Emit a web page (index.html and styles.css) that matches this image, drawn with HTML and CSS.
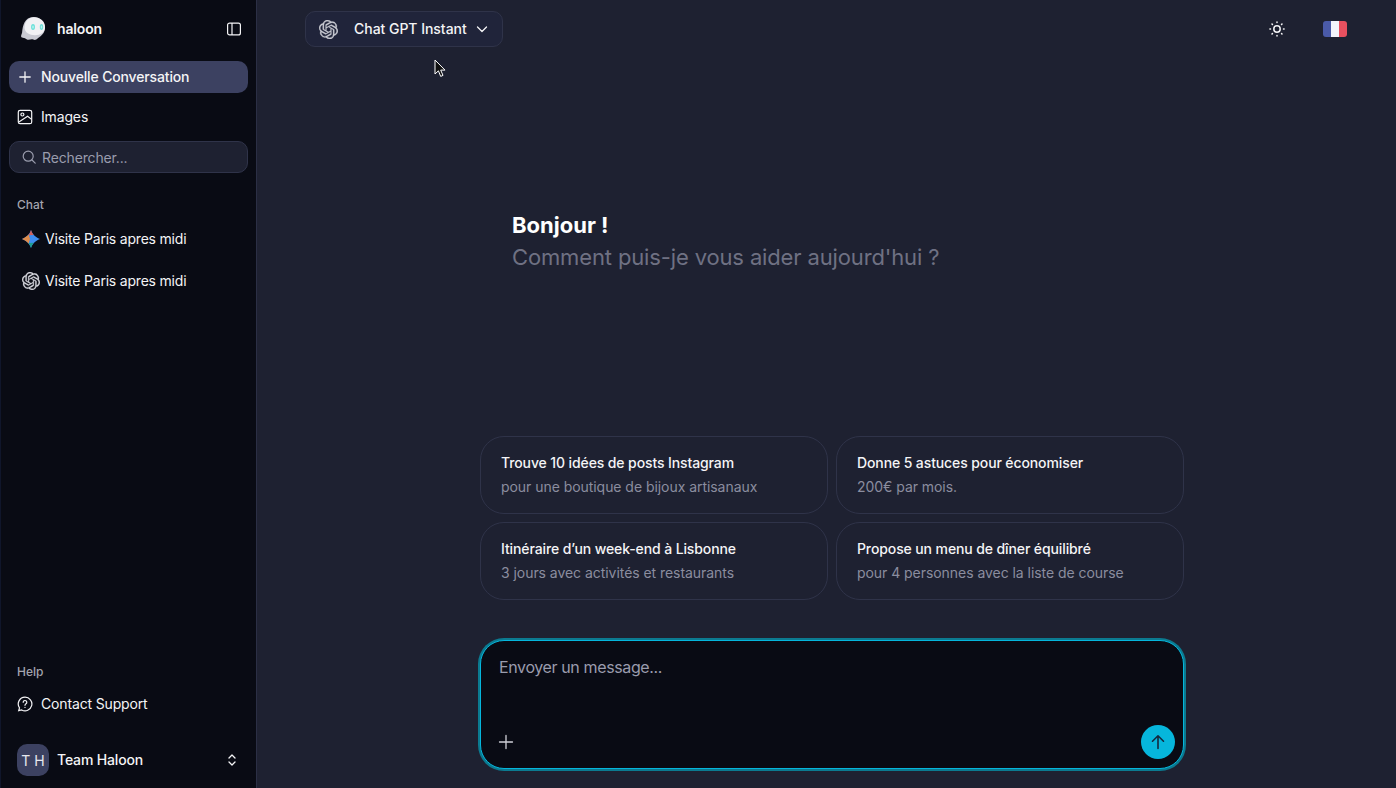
FILE: index.html
```html
<!DOCTYPE html>
<html lang="fr">
<head>
  <meta charset="UTF-8">
  <title>Haloon</title>
  <link rel="stylesheet" href="styles.css">
</head>
<body>
  <svg class="svg-defs" width="0" height="0">
    <defs>
      <symbol id="gpt" viewBox="0 0 24 24">
        <path fill="currentColor" stroke="currentColor" stroke-width="0.35" d="M22.28 9.82a5.98 5.98 0 0 0-.52-4.91 6.05 6.05 0 0 0-6.51-2.9A6.07 6.07 0 0 0 4.98 4.18a5.98 5.98 0 0 0-4 2.9 6.05 6.05 0 0 0 .74 7.1 5.98 5.98 0 0 0 .51 4.91 6.05 6.05 0 0 0 6.52 2.9A5.98 5.98 0 0 0 13.26 24a6.06 6.06 0 0 0 5.77-4.21 5.99 5.99 0 0 0 4-2.9 6.06 6.06 0 0 0-.75-7.07zM13.26 22.43a4.48 4.48 0 0 1-2.88-1.04l.14-.08 4.78-2.76a.79.79 0 0 0 .39-.68v-6.74l2.02 1.17a.07.07 0 0 1 .04.05v5.58a4.5 4.5 0 0 1-4.49 4.5zM3.6 18.3a4.47 4.47 0 0 1-.53-3.01l.14.08 4.78 2.76a.77.77 0 0 0 .78 0l5.84-3.37v2.33a.08.08 0 0 1-.03.06l-4.83 2.79a4.5 4.5 0 0 1-6.14-1.65zM2.34 7.9a4.49 4.49 0 0 1 2.37-1.97v5.68a.77.77 0 0 0 .39.68l5.81 3.35-2.02 1.17a.08.08 0 0 1-.07 0L3.99 14a4.5 4.5 0 0 1-1.65-6.1zm16.6 3.86-5.84-3.39 2.02-1.16a.08.08 0 0 1 .07 0l4.83 2.79a4.49 4.49 0 0 1-.68 8.1v-5.68a.79.79 0 0 0-.4-.66zm2.01-3.02-.14-.09-4.77-2.78a.78.78 0 0 0-.79 0L9.41 9.23V6.9a.07.07 0 0 1 .03-.06l4.83-2.79a4.5 4.5 0 0 1 6.68 4.66zM8.31 12.86l-2.02-1.16a.08.08 0 0 1-.04-.06V6.08a4.5 4.5 0 0 1 7.37-3.45l-.14.08-4.78 2.76a.79.79 0 0 0-.39.68zm1.1-2.37 2.6-1.5 2.6 1.5v3l-2.6 1.5-2.6-1.5z"/>
      </symbol>
    </defs>
  </svg>

  <div class="app">
    <aside class="sidebar">
      <div class="brand">
        <div class="brand-left">
          <svg class="logo" viewBox="0 0 26 26">
            <path fill="#c9cad3" d="M13.500 1C20 1 25 5.500 25 11.500c0 4.500-2.600 7.500-5.500 9.500-1.500 1.100-2.300 2.300-3.800 2.800-1.600.5-2.500-.5-3.900-.5-1.500 0-2.700.9-4.300.4-1.500-.5-2-1.700-3.500-1.800-1.500-.1-2.700-.5-2.900-1.500-.2-1.100.6-2.400 1-4C2.700 10 4.500 1 13.500 1z"/>
            <path fill="#f1f1f4" d="M14 1.200c6 0 11 4.300 11 10 0 5.300-4.500 8-10 8S4.500 16.500 4.500 11.500C4.500 5.500 8.500 1.200 14 1.200z"/>
            <ellipse cx="13" cy="11" rx="2" ry="3" fill="#6fe0da"/>
            <ellipse cx="21.500" cy="11" rx="1.700" ry="3" fill="#6fe0da"/>
            <ellipse cx="13" cy="11" rx="0.800" ry="1.500" fill="#b9f3ee"/>
            <ellipse cx="21.500" cy="11" rx="0.700" ry="1.500" fill="#b9f3ee"/>
          </svg>
          <span class="brand-name label">haloon</span>
        </div>
        <svg class="icon-16" viewBox="0 0 16 16" fill="none" stroke="currentColor" stroke-width="1.200">
          <rect x="1.600" y="2.100" width="12.800" height="11.800" rx="2"/>
          <path d="M6 2.100v11.800"/>
        </svg>
      </div>

      <a class="new-chat">
        <svg class="icon-16" viewBox="0 0 16 16" fill="none" stroke="currentColor" stroke-width="1.300" stroke-linecap="round">
          <path d="M8 2.800v10.400M2.800 8h10.400"/>
        </svg>
        <span class="label">Nouvelle Conversation</span>
      </a>

      <a class="nav-item">
        <svg class="icon-16" viewBox="0 0 16 16" fill="none" stroke="currentColor" stroke-width="1.200">
          <rect x="1.300" y="1.300" width="13.400" height="13.400" rx="1.800"/>
          <circle cx="5.400" cy="5.500" r="1.500"/>
          <path d="M1.500 13.200 10.600 7.200l4 3.200"/>
        </svg>
        <span class="label">Images</span>
      </a>

      <div class="search">
        <svg class="search-icon" viewBox="0 0 14 14" fill="none" stroke="currentColor" stroke-width="1.200" stroke-linecap="round">
          <circle cx="6.200" cy="6.200" r="5"/>
          <path d="m10 10 3.200 3.200"/>
        </svg>
        <span>Rechercher...</span>
      </div>

      <div class="section-title chat-title">Chat</div>
      <div class="chat-row">
        <svg class="chat-icon" viewBox="0 0 18 18">
          <path fill="#3f8ef0" d="M9 0c1.300 4 3.900 6.800 9 9-5.100 2.200-7.700 5-9 9-1.300-4-3.900-6.800-9-9 5.100-2.200 7.700-5 9-9z"/>
          <path fill="#e08c4a" d="M0 9c3-1.300 5.100-2.700 6.600-4.700L8 9l-1.400 4.700C5.100 11.700 3 10.300 0 9z"/>
          <path fill="#d0605a" d="M9 0c.6 1.900 1.500 3.500 2.600 5L6.600 5.200C7.700 3.700 8.400 2 9 0z"/>
          <path fill="#1f9d8f" d="M9 18c-.6-1.900-1.500-3.500-2.600-5l5.200-.2C10.400 14.300 9.600 16 9 18z"/>
        </svg>
        <span class="label">Visite Paris apres midi</span>
      </div>
      <div class="chat-row">
        <svg class="chat-icon gpt-side"><use href="#gpt"/></svg>
        <span class="label">Visite Paris apres midi</span>
      </div>

      <div class="side-bottom">
        <div class="section-title">Help</div>
        <a class="nav-item support">
          <svg class="icon-16" viewBox="0 0 16 16" fill="none" stroke="currentColor" stroke-width="1.200" stroke-linecap="round">
            <path d="M8 1.200a6.800 6.800 0 1 1-3.300 12.700l-3 .8.800-2.800A6.800 6.800 0 0 1 8 1.200z"/>
            <path d="M6.200 6.300a1.800 1.800 0 1 1 2.800 1.500c-.6.400-1 .8-1 1.500"/>
            <path d="M8 11.400v.1"/>
          </svg>
          <span class="label">Contact Support</span>
        </a>
        <div class="team">
          <div class="avatar">T H</div>
          <span class="team-name label">Team Haloon</span>
          <svg class="icon-16" viewBox="0 0 16 16" fill="none" stroke="currentColor" stroke-width="1.300" stroke-linecap="round" stroke-linejoin="round">
            <path d="M5 6l3-3 3 3M5 10l3 3 3-3"/>
          </svg>
        </div>
      </div>
    </aside>

    <main class="main">
      <header class="topbar">
        <button class="model-btn">
          <svg class="gpt-top"><use href="#gpt"/></svg>
          <span class="model-name">Chat GPT Instant</span>
          <svg class="icon-16" viewBox="0 0 16 16" fill="none" stroke="currentColor" stroke-width="1.300" stroke-linecap="round" stroke-linejoin="round">
            <path d="m3.500 6 4.500 4.500L12.500 6"/>
          </svg>
        </button>
        <div class="top-right">
          <svg class="icon-16" viewBox="0 0 16 16" fill="none" stroke="currentColor" stroke-width="1.500" stroke-linecap="round">
            <circle cx="8" cy="8" r="3.200"/>
            <path d="M8 .9v.6M8 14.500v.6M.9 8h.6M14.500 8h.6M3 3l.4.4M12.600 12.600l.4.4M3 13l.4-.4M12.600 3.400l.4-.4"/>
          </svg>
          <div class="flag"><i class="blue"></i><i class="white"></i><i class="red"></i></div>
        </div>
      </header>

      <svg class="cursor" width="12" height="19" viewBox="0 0 12 19">
        <path d="M1 1v14l3.400-3.200 2.300 5.600 2.300-1-2.300-5.300H11z" fill="#111" stroke="#fff" stroke-width="1"/>
      </svg>

      <section class="greeting">
        <h1>Bonjour !</h1>
        <p>Comment puis-je vous aider aujourd'hui ?</p>
      </section>

      <section class="prompts">
        <div class="prompt">
          <strong>Trouve 10 idées de posts Instagram</strong>
          <span>pour une boutique de bijoux artisanaux</span>
        </div>
        <div class="prompt">
          <strong>Donne 5 astuces pour économiser</strong>
          <span>200€ par mois.</span>
        </div>
        <div class="prompt">
          <strong>Itinéraire d’un week-end à Lisbonne</strong>
          <span>3 jours avec activités et restaurants</span>
        </div>
        <div class="prompt">
          <strong>Propose un menu de dîner équilibré</strong>
          <span>pour 4 personnes avec la liste de course</span>
        </div>
      </section>

      <section class="composer">
        <div class="composer-text">Envoyer un message...</div>
        <div class="composer-foot">
          <svg class="icon-16 composer-plus" viewBox="0 0 16 16" fill="none" stroke="currentColor" stroke-width="1.300" stroke-linecap="round">
            <path d="M8 1.500v13M1.500 8h13"/>
          </svg>
          <button class="send">
            <svg width="18" height="18" viewBox="0 0 18 18" fill="none" stroke="currentColor" stroke-width="1.600" stroke-linecap="round" stroke-linejoin="round">
              <path d="M9 15.500V2.800M3.500 8.200 9 2.800l5.500 5.400"/>
            </svg>
          </button>
        </div>
      </section>
    </main>
  </div>
</body>
</html>
```

FILE: styles.css
```css
* {
  box-sizing: border-box;
}

html, body {
  height: 100%;
}

body {
  margin: 0;
  background: #1e2131;
  color: #f4f4f6;
  font-family: Inter, 'Noto Sans', sans-serif;
  font-size: 14px;
  overflow: hidden;
}

.svg-defs {
  position: absolute;
}

.app {
  display: flex;
  height: 788px;
}

.icon-16 {
  width: 16px;
  height: 16px;
  flex-shrink: 0;
}

.label {
  padding-bottom: 2px;
  letter-spacing: -0.15px;
}

/* sidebar */
.sidebar {
  width: 257px;
  flex-shrink: 0;
  display: flex;
  flex-direction: column;
  padding: 0 8px 0 9px;
  background: #090b14;
  border-right: 1px solid #2b2f45;
  box-shadow: inset 1px 0 0 #10162b;
}

.brand {
  height: 61px;
  display: flex;
  align-items: center;
  justify-content: space-between;
  padding: 0 6px 3px 11px;
}

.brand-left {
  display: flex;
  align-items: center;
  gap: 11px;
}

.logo {
  width: 26px;
  height: 26px;
}

.brand-name {
  font-weight: 600;
  font-size: 14px;
}

.new-chat {
  height: 32px;
  display: flex;
  align-items: center;
  gap: 8px;
  padding: 0 8px;
  border-radius: 10px;
  background: #3c4161;
  font-weight: 500;
}

.nav-item {
  height: 32px;
  display: flex;
  align-items: center;
  gap: 8px;
  padding: 0 8px;
  margin-top: 8px;
}

.search {
  height: 32px;
  display: flex;
  align-items: center;
  gap: 6px;
  margin-top: 8px;
  padding: 0 11px 0 12px;
  border: 1px solid #2f3349;
  border-radius: 10px;
  background: #1e2131;
  color: #9a9cad;
  letter-spacing: -0.15px;
}

.search-icon {
  width: 14px;
  height: 14px;
  flex-shrink: 0;
}

.section-title {
  font-size: 12px;
  font-weight: 500;
  color: #a3a4ae;
  padding-left: 8px;
}

.chat-title {
  margin-top: 24px;
  margin-bottom: 6px;
}

.chat-row {
  height: 42px;
  display: flex;
  align-items: center;
  gap: 5px;
  padding-left: 13px;
}

.chat-row .label {
  letter-spacing: -0.2px;
}

.chat-icon {
  width: 18px;
  height: 18px;
  flex-shrink: 0;
}

.gpt-side {
  color: #d9dae0;
}

.side-bottom {
  margin-top: auto;
  padding-bottom: 12px;
}

.support {
  margin-top: 9px;
}

.team {
  height: 32px;
  display: flex;
  align-items: center;
  gap: 8px;
  margin-top: 24px;
  padding: 0 8px;
}

.avatar {
  width: 32px;
  height: 32px;
  flex-shrink: 0;
  display: flex;
  align-items: center;
  justify-content: center;
  border-radius: 10px;
  background: #3c4161;
  font-size: 14px;
  color: #e6e7ee;
}

.team-name {
  flex: 1;
  font-weight: 500;
}

/* main area */
.main {
  position: relative;
  flex: 1;
  display: flex;
  flex-direction: column;
  align-items: center;
}

.topbar {
  align-self: stretch;
  display: flex;
  align-items: center;
  justify-content: space-between;
  padding: 11px 49px 0 48px;
}

.model-btn {
  width: 198px;
  height: 36px;
  display: flex;
  align-items: center;
  padding: 0 12px 0 13px;
  border: 1px solid #2f3349;
  border-radius: 10px;
  background: #20243a;
  color: #f4f4f6;
  font-family: inherit;
  font-size: 14px;
  font-weight: 500;
}

.gpt-top {
  width: 19px;
  height: 19px;
  flex-shrink: 0;
  color: #c9cad2;
}

.model-name {
  margin-left: 16px;
  margin-right: 7px;
  padding-bottom: 2px;
  white-space: nowrap;
  letter-spacing: -0.03px;
}

.top-right {
  display: flex;
  align-items: center;
  gap: 38px;
}

.flag {
  width: 24px;
  height: 16px;
  display: flex;
  border-radius: 3px;
  overflow: hidden;
}

.flag i {
  flex: 1;
}

.flag .blue {
  background: #4a5aa8;
}

.flag .white {
  background: #f3f4fa;
}

.flag .red {
  background: #e8505f;
}

.cursor {
  position: absolute;
  left: 177px;
  top: 59px;
}

.greeting {
  width: 640px;
  margin-top: 162px;
  align-self: flex-start;
  margin-left: 255px;
}

.greeting h1 {
  margin: 0;
  font-size: 22px;
  line-height: 32px;
  font-weight: 700;
  color: #ffffff;
}

.greeting p {
  margin: 0;
  font-size: 22px;
  line-height: 32px;
  letter-spacing: -0.14px;
  color: #6f7183;
}

.prompts {
  width: 704px;
  display: grid;
  grid-template-columns: 1fr 1fr;
  gap: 8px;
  margin-top: 163px;
  margin-left: 11px;
}

.prompt {
  height: 78px;
  display: flex;
  flex-direction: column;
  justify-content: center;
  gap: 6px;
  padding: 0 20px;
  border: 1px solid #2f3349;
  border-radius: 24px;
}

.prompt strong {
  font-weight: 500;
  font-size: 14px;
  line-height: 18px;
  letter-spacing: -0.11px;
  color: #f4f4f6;
}

.prompt span {
  font-size: 14px;
  line-height: 18px;
  letter-spacing: -0.05px;
  color: #8b8d9f;
}

.composer {
  width: 704px;
  height: 129px;
  margin-top: 40px;
  margin-left: 11px;
  display: flex;
  flex-direction: column;
  justify-content: space-between;
  padding: 16px 8px 9px 18px;
  border: 1px solid #05b6dc;
  border-radius: 24px;
  background: #090b14;
  box-shadow: 0 0 0 2px #0b7a90;
}

.composer-text {
  font-size: 16px;
  line-height: 20px;
  letter-spacing: -0.38px;
  color: #9a9cad;
}

.composer-foot {
  display: flex;
  align-items: center;
  justify-content: space-between;
}

.composer-plus {
  margin-left: -1px;
  color: #d0d1d8;
}

.send {
  width: 34px;
  height: 34px;
  display: flex;
  align-items: center;
  justify-content: center;
  padding: 0;
  border: none;
  border-radius: 50%;
  background: #06b6dc;
  color: #14283f;
}
```
